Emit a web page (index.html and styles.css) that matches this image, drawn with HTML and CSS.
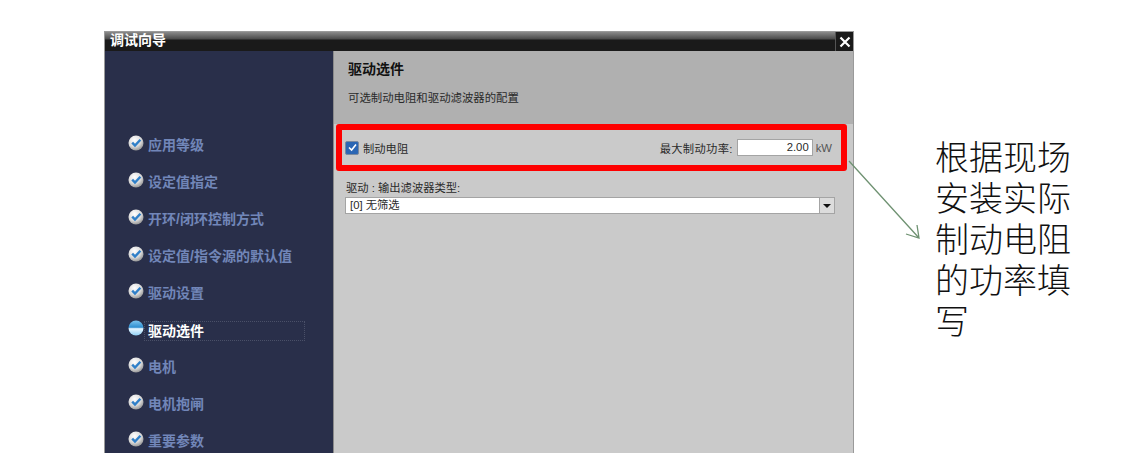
FILE: index.html
```html
<!DOCTYPE html>
<html lang="zh-CN">
<head>
<meta charset="UTF-8">
<meta name="viewport" content="width=device-width, initial-scale=1.0">
<title>调试向导</title>
<link rel="stylesheet" href="styles.css">
</head>
<body>

<svg width="0" height="0" class="defs">
    <defs>
        <radialGradient id="ballDone" cx="40%" cy="30%" r="75%">
            <stop offset="0" stop-color="#ffffff"/>
            <stop offset="0.6" stop-color="#d8d8d8"/>
            <stop offset="1" stop-color="#8c8c8c"/>
        </radialGradient>
        <linearGradient id="ballNow" x1="0" y1="0" x2="0" y2="1">
            <stop offset="0" stop-color="#7cc4ee"/>
            <stop offset="0.45" stop-color="#2f8fd0"/>
            <stop offset="0.55" stop-color="#e8f6ff"/>
            <stop offset="1" stop-color="#8fd0f5"/>
        </linearGradient>
        <symbol id="iconDone" viewBox="0 0 16 16">
            <circle cx="8" cy="8" r="7.5" fill="url(#ballDone)"/>
            <path d="M4.2 7.6 L7 10.6 L12.4 4.8" fill="none" stroke="#2f7fc8" stroke-width="2.4"/>
        </symbol>
        <symbol id="iconNow" viewBox="0 0 16 16">
            <circle cx="8" cy="8" r="7.5" fill="url(#ballNow)"/>
        </symbol>
    </defs>
</svg>

<div class="page">
    <div class="window">
        <div class="titlebar">
            <span class="title">调试向导</span>
            <button class="close">
                <svg width="12" height="12" viewBox="0 0 12 12">
                    <path d="M1.5 1.5 L10.5 10.5 M10.5 1.5 L1.5 10.5" stroke="#fff" stroke-width="2.2"/>
                </svg>
            </button>
        </div>
        <div class="content">
            <ul class="steps">
                <li class="step"><svg class="ball"><use href="#iconDone"/></svg><span>应用等级</span></li>
                <li class="step"><svg class="ball"><use href="#iconDone"/></svg><span>设定值指定</span></li>
                <li class="step"><svg class="ball"><use href="#iconDone"/></svg><span>开环/闭环控制方式</span></li>
                <li class="step"><svg class="ball"><use href="#iconDone"/></svg><span>设定值/指令源的默认值</span></li>
                <li class="step"><svg class="ball"><use href="#iconDone"/></svg><span>驱动设置</span></li>
                <li class="step current"><svg class="ball"><use href="#iconNow"/></svg><span>驱动选件</span></li>
                <li class="step"><svg class="ball"><use href="#iconDone"/></svg><span>电机</span></li>
                <li class="step"><svg class="ball"><use href="#iconDone"/></svg><span>电机抱闸</span></li>
                <li class="step"><svg class="ball"><use href="#iconDone"/></svg><span>重要参数</span></li>
            </ul>
            <div class="panel">
                <div class="panel-head">
                    <h2>驱动选件</h2>
                    <p>可选制动电阻和驱动滤波器的配置</p>
                </div>
                <div class="panel-body">
                    <div class="highlight">
                        <span class="check">
                            <svg width="9" height="9" viewBox="0 0 9 9">
                                <path d="M1 4.5 L3.6 7 L8 1.6" fill="none" stroke="#fff" stroke-width="1.6"/>
                            </svg>
                        </span>
                        <span class="check-label">制动电阻</span>
                        <span class="power-label">最大制动功率:</span>
                        <span class="power-input">2.00</span>
                        <span class="unit">kW</span>
                    </div>
                    <div class="filter-label">驱动 : 输出滤波器类型:</div>
                    <div class="select">
                        <span class="select-value">[0] 无筛选</span>
                        <span class="select-btn"></span>
                    </div>
                </div>
            </div>
        </div>
    </div>
    <div class="note">根据现场安装实际制动电阻的功率填写</div>

    <!-- 指向输入框的箭头 -->
    <svg class="arrow" width="1131" height="453" viewBox="0 0 1131 453">
        <path d="M849 161 L919 238 M906 234 L919 238 L917 225" fill="none" stroke="#6f9272" stroke-width="1.3"/>
    </svg>
</div>

</body>
</html>
```

FILE: styles.css
```css
html, body {
    margin: 0;
    padding: 0;
    background-color: #fff;
}

body {
    font-family: "Liberation Sans", "Noto Sans CJK SC", sans-serif;
    overflow: hidden;
}

.defs {
    display: block;
    height: 0;
}

.page {
    position: relative;
    display: flex;
    align-items: flex-start;
    width: 1131px;
    height: 453px;
    overflow: hidden;
}

.window {
    flex: none;
    width: 750px;
    height: 422px;
    margin: 31px 0 0 104px;
    border: 1px solid #9a9a9a;
    border-bottom: 0;
    box-sizing: border-box;
    display: flex;
    flex-direction: column;
}

.titlebar {
    flex: none;
    height: 19px;
    display: flex;
    align-items: center;
    justify-content: space-between;
    background: linear-gradient(#8a8a8a 0, #4a4a4a 7px, #1a1a1a 8px, #1a1a1a 100%);
}

.title {
    padding: 0 0 3px 5px;
    color: #fff;
    font-size: 14px;
    line-height: 16px;
    font-weight: bold;
}

.close {
    width: 18px;
    height: 19px;
    padding: 0;
    border: 0;
    border-left: 1px solid #555;
    background-color: #1a1a1a;
    display: flex;
    align-items: center;
    justify-content: center;
}

.content {
    flex: 1;
    display: flex;
    min-height: 0;
}

.steps {
    flex: none;
    width: 229px;
    margin: 0;
    padding: 74px 0 0 23px;
    box-sizing: border-box;
    list-style-type: none;
    background-color: #292f4a;
    border-right: 1px solid #8a8a8a;
}

.step {
    height: 37px;
    display: flex;
    align-items: center;
    gap: 4px;
    color: #7186b8;
    font-size: 14px;
    font-weight: bold;
    white-space: nowrap;
}

.ball {
    flex: none;
    width: 16px;
    height: 16px;
    margin-top: -2px;
}

.step.current span {
    flex: none;
    width: 156px;
    height: 18px;
    line-height: 18px;
    margin: 5px 0 0 -4px;
    padding-left: 3px;
    color: #fff;
    border: 1px dotted #4a5068;
}

.panel {
    flex: 1;
    display: flex;
    flex-direction: column;
    background-color: #cacaca;
    color: #2a2a2a;
}

.panel-head {
    height: 73px;
    padding-left: 14px;
    box-sizing: border-box;
    background-color: #b0b0b0;
}

.panel-head h2 {
    margin: 0;
    padding-top: 8px;
    font-size: 14px;
    line-height: 20px;
    color: #111;
}

.panel-head p {
    margin: 11px 0 0;
    font-size: 11.4px;
    line-height: 16px;
}

.panel-body {
    flex: 1;
    padding-left: 2px;
}

.highlight {
    width: 511px;
    height: 47px;
    box-sizing: border-box;
    padding: 0 9px 0 3px;
    border: 6px solid #fe0000;
    border-radius: 3px;
    display: flex;
    align-items: center;
    font-size: 11.3px;
}

.check {
    width: 14px;
    height: 14px;
    box-sizing: border-box;
    border: 1px solid #7a8aa0;
    border-radius: 2px;
    background-color: #2b66b4;
    display: flex;
    align-items: center;
    justify-content: center;
}

.check-label {
    margin-left: 4px;
}

.power-label {
    margin-left: auto;
    letter-spacing: 0.3px;
}

.power-input {
    width: 76px;
    height: 17px;
    line-height: 15px;
    margin-left: 4px;
    padding-right: 3px;
    box-sizing: border-box;
    border: 1px solid #a4a4a4;
    background-color: #fff;
    text-align: right;
}

.unit {
    margin-left: 3px;
    color: #555;
}

.filter-label {
    margin: 9px 0 0 10px;
    font-size: 11.3px;
    line-height: 16px;
}

.select {
    width: 490px;
    height: 17px;
    margin: 1px 0 0 9px;
    box-sizing: border-box;
    border: 1px solid #a4a4a4;
    background-color: #fff;
    display: flex;
    align-items: center;
    justify-content: space-between;
    font-size: 11.3px;
    line-height: 13px;
}

.select-value {
    padding-left: 4px;
}

.select-btn {
    width: 15px;
    height: 15px;
    box-sizing: border-box;
    border-left: 1px solid #a4a4a4;
    background-color: #dcdcdc;
    display: flex;
    align-items: center;
    justify-content: center;
}

.select-btn::after {
    content: "";
    border-top: 4px solid #111;
    border-left: 4px solid transparent;
    border-right: 4px solid transparent;
}

.note {
    flex: none;
    width: 138px;
    margin: 135px 0 0 81px;
    font-family: "Noto Sans CJK SC", sans-serif;
    font-size: 34px;
    font-weight: 300;
    line-height: 41px;
    color: #111;
}

.arrow {
    position: absolute;
    left: 0;
    top: 0;
    pointer-events: none;
}
```
